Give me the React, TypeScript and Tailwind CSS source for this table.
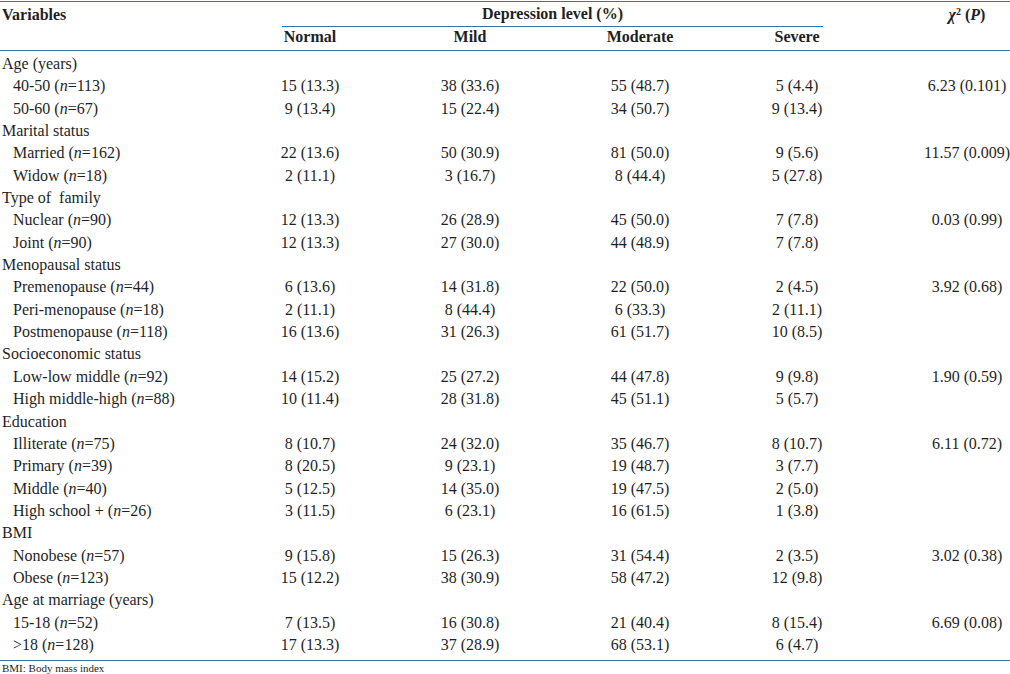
import React from 'react';

type Row = {
  label: React.ReactNode;
  sub?: boolean;
  vals?: string[];
  chi?: string;
};

const n = (txt: string, count: string) => (
  <>
    {txt} (<i>n</i>={count})
  </>
);

const rows: Row[] = [
  { label: 'Age (years)' },
  { label: n('40-50', '113'), sub: true, vals: ['15 (13.3)', '38 (33.6)', '55 (48.7)', '5 (4.4)'], chi: '6.23 (0.101)' },
  { label: n('50-60', '67'), sub: true, vals: ['9 (13.4)', '15 (22.4)', '34 (50.7)', '9 (13.4)'] },
  { label: 'Marital status' },
  { label: n('Married', '162'), sub: true, vals: ['22 (13.6)', '50 (30.9)', '81 (50.0)', '9 (5.6)'], chi: '11.57 (0.009)' },
  { label: n('Widow', '18'), sub: true, vals: ['2 (11.1)', '3 (16.7)', '8 (44.4)', '5 (27.8)'] },
  { label: 'Type of  family' },
  { label: n('Nuclear', '90'), sub: true, vals: ['12 (13.3)', '26 (28.9)', '45 (50.0)', '7 (7.8)'], chi: '0.03 (0.99)' },
  { label: n('Joint', '90'), sub: true, vals: ['12 (13.3)', '27 (30.0)', '44 (48.9)', '7 (7.8)'] },
  { label: 'Menopausal status' },
  { label: n('Premenopause', '44'), sub: true, vals: ['6 (13.6)', '14 (31.8)', '22 (50.0)', '2 (4.5)'], chi: '3.92 (0.68)' },
  { label: n('Peri-menopause', '18'), sub: true, vals: ['2 (11.1)', '8 (44.4)', '6 (33.3)', '2 (11.1)'] },
  { label: n('Postmenopause', '118'), sub: true, vals: ['16 (13.6)', '31 (26.3)', '61 (51.7)', '10 (8.5)'] },
  { label: 'Socioeconomic status' },
  { label: n('Low-low middle', '92'), sub: true, vals: ['14 (15.2)', '25 (27.2)', '44 (47.8)', '9 (9.8)'], chi: '1.90 (0.59)' },
  { label: n('High middle-high', '88'), sub: true, vals: ['10 (11.4)', '28 (31.8)', '45 (51.1)', '5 (5.7)'] },
  { label: 'Education' },
  { label: n('Illiterate', '75'), sub: true, vals: ['8 (10.7)', '24 (32.0)', '35 (46.7)', '8 (10.7)'], chi: '6.11 (0.72)' },
  { label: n('Primary', '39'), sub: true, vals: ['8 (20.5)', '9 (23.1)', '19 (48.7)', '3 (7.7)'] },
  { label: n('Middle', '40'), sub: true, vals: ['5 (12.5)', '14 (35.0)', '19 (47.5)', '2 (5.0)'] },
  { label: n('High school +', '26'), sub: true, vals: ['3 (11.5)', '6 (23.1)', '16 (61.5)', '1 (3.8)'] },
  { label: 'BMI' },
  { label: n('Nonobese', '57'), sub: true, vals: ['9 (15.8)', '15 (26.3)', '31 (54.4)', '2 (3.5)'], chi: '3.02 (0.38)' },
  { label: n('Obese', '123'), sub: true, vals: ['15 (12.2)', '38 (30.9)', '58 (47.2)', '12 (9.8)'] },
  { label: 'Age at marriage (years)' },
  { label: n('15-18', '52'), sub: true, vals: ['7 (13.5)', '16 (30.8)', '21 (40.4)', '8 (15.4)'], chi: '6.69 (0.08)' },
  { label: n('>18', '128'), sub: true, vals: ['17 (13.3)', '37 (28.9)', '68 (53.1)', '6 (4.7)'] },
];

// column layout: Variables | Normal | Mild | Moderate | Severe | chi2
const cols = 'grid grid-cols-[250px_120px_200px_140px_174px_126px]';

export default function App() {
  return (
    <div
      className="w-[1010px] h-[674px] bg-white text-[#1f1f1f] text-[16px] overflow-hidden"
      style={{ fontFamily: '"Liberation Serif", "Times New Roman", serif' }}
    >
      <div className="mt-px border-t border-[#3373ad]">
        {/* header row 1 */}
        <div className={`${cols} h-[23px] items-center font-bold`}>
          <div className="pl-[2px]">Variables</div>
          <div className="col-span-4 flex h-full flex-col justify-end">
            <div className="ml-[32px] mr-[61px] flex h-full items-center justify-center border-b border-[#3373ad]">
              Depression level (%)
            </div>
          </div>
          <div className="pl-[40px] text-center">
            <i>χ</i>
            <sup className="text-[10px]">2</sup> (<i>P</i>)
          </div>
        </div>
        {/* header row 2 */}
        <div className={`${cols} h-[26px] items-center border-b border-[#3373ad] pb-[2px] font-bold`}>
          <div />
          <div className="text-center">Normal</div>
          <div className="text-center">Mild</div>
          <div className="text-center">Moderate</div>
          <div className="text-center">Severe</div>
          <div />
        </div>
        {/* body */}
        <div className="border-b border-[#3373ad] pt-px pb-[5px]">
          {rows.map((r, i) => (
            <div key={i} className={`${cols} h-[22.35px] items-center whitespace-pre`}>
              <div className={r.sub ? 'pl-[13px]' : 'pl-[2px]'}>{r.label}</div>
              {(r.vals ?? ['', '', '', '']).map((v, j) => (
                <div key={j} className="text-center">
                  {v}
                </div>
              ))}
              <div className="pl-[40px] text-center">{r.chi ?? ''}</div>
            </div>
          ))}
        </div>
        <div className="pl-[2px] text-[11px] leading-[14px]">BMI: Body mass index</div>
      </div>
    </div>
  );
}
